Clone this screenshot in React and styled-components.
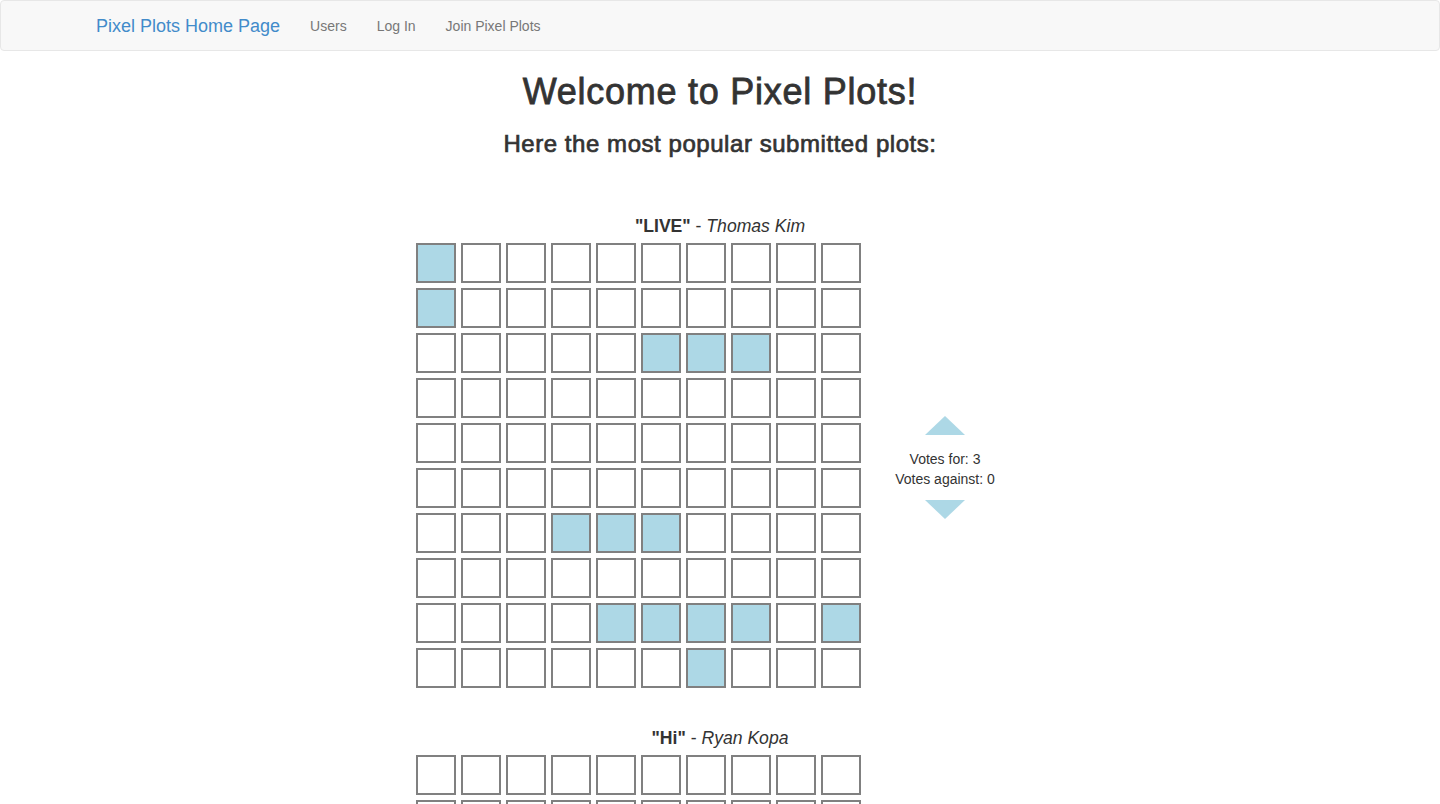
import React from "react";
import styled, { createGlobalStyle } from "styled-components";

const Global = createGlobalStyle`
  html, body { margin: 0; padding: 0; background: #fff; }
  body {
    font-family: "Liberation Sans", Arial, Helvetica, sans-serif;
    font-size: 14px;
    line-height: 1.42857;
    color: #333;
  }
  * { box-sizing: border-box; }
`;

const Navbar = styled.nav`
  height: 51px;
  background: #f8f8f8;
  border: 1px solid #e7e7e7;
  border-radius: 4px;
  display: flex;
  align-items: center;
  padding-left: 80px;
`;

const Brand = styled.a`
  font-size: 18px;
  color: #428bca;
  padding: 0 15px;
  text-decoration: none;
  line-height: 20px;
`;

const NavLink = styled.a`
  font-size: 14px;
  color: #777;
  padding: 0 15px;
  text-decoration: none;
  line-height: 20px;
`;

const Main = styled.main`
  display: flex;
  flex-direction: column;
  align-items: center;
`;

const Title = styled.h1`
  font-size: 36px;
  font-weight: 500;
  line-height: 40px;
  margin: 21px 0 0;
  color: #333;
  letter-spacing: 0.75px;
  -webkit-text-stroke: 0.8px #333;
`;

const Subtitle = styled.h3`
  font-size: 24px;
  font-weight: 500;
  line-height: 26px;
  margin: 19px 0 0;
  color: #333;
  letter-spacing: 0.55px;
  -webkit-text-stroke: 0.7px #333;
`;

const PlotList = styled.div`
  margin-top: 58px;
  display: flex;
  flex-direction: column;
  gap: 39px;
`;

const Plot = styled.section`
  width: 608px;
  display: flex;
  flex-direction: column;
`;

const Caption = styled.div`
  text-align: center;
  font-size: 17.6px;
  line-height: 22px;
  margin-bottom: 6px;
  color: #333;
`;

const Name = styled.b`
  font-weight: bold;
`;

const Author = styled.i`
  font-style: italic;
`;

const Row = styled.div`
  display: flex;
  align-items: center;
`;

const Grid = styled.div`
  display: grid;
  grid-template-columns: repeat(10, 40px);
  grid-auto-rows: 40px;
  gap: 5px;
`;

const Cell = styled.div`
  width: 40px;
  height: 40px;
  border: 2px solid #808080;
  background: ${(p) => (p.$on ? "#add8e6" : "#fff")};
`;

const Votes = styled.div`
  flex: 1;
  display: flex;
  flex-direction: column;
  align-items: center;
  font-size: 14px;
  line-height: 20px;
  color: #333;
  padding-top: 4px;
  padding-left: 5px;
`;

const Arrow = styled.div`
  width: 0;
  height: 0;
  border-left: 20px solid transparent;
  border-right: 20px solid transparent;
  ${(p) =>
    p.$down
      ? "border-top: 19px solid #add8e6; margin-top: 11px;"
      : "border-bottom: 19px solid #add8e6; margin-bottom: 14px;"}
`;

const livePixels = new Set([
  "0-0", "1-0",
  "2-5", "2-6", "2-7",
  "6-3", "6-4", "6-5",
  "8-4", "8-5", "8-6", "8-7", "8-9",
  "9-6",
]);

const plots = [
  { name: "LIVE", author: "Thomas Kim", pixels: livePixels, up: 3, down: 0 },
  { name: "Hi", author: "Ryan Kopa", pixels: new Set(), up: 0, down: 0 },
];

function PlotView({ plot }) {
  const cells = [];
  for (let r = 0; r < 10; r++) {
    for (let c = 0; c < 10; c++) {
      cells.push(<Cell key={`${r}-${c}`} $on={plot.pixels.has(`${r}-${c}`)} />);
    }
  }
  return (
    <Plot>
      <Caption>
        <Name>"{plot.name}"</Name> - <Author>{plot.author}</Author>
      </Caption>
      <Row>
        <Grid>{cells}</Grid>
        <Votes>
          <Arrow />
          <div>Votes for: {plot.up}</div>
          <div>Votes against: {plot.down}</div>
          <Arrow $down />
        </Votes>
      </Row>
    </Plot>
  );
}

export default function App() {
  return (
    <>
      <Global />
      <Navbar>
        <Brand href="#">Pixel Plots Home Page</Brand>
        <NavLink href="#">Users</NavLink>
        <NavLink href="#">Log In</NavLink>
        <NavLink href="#">Join Pixel Plots</NavLink>
      </Navbar>
      <Main>
        <Title>Welcome to Pixel Plots!</Title>
        <Subtitle>Here the most popular submitted plots:</Subtitle>
        <PlotList>
          {plots.map((p) => (
            <PlotView key={p.name} plot={p} />
          ))}
        </PlotList>
      </Main>
    </>
  );
}
